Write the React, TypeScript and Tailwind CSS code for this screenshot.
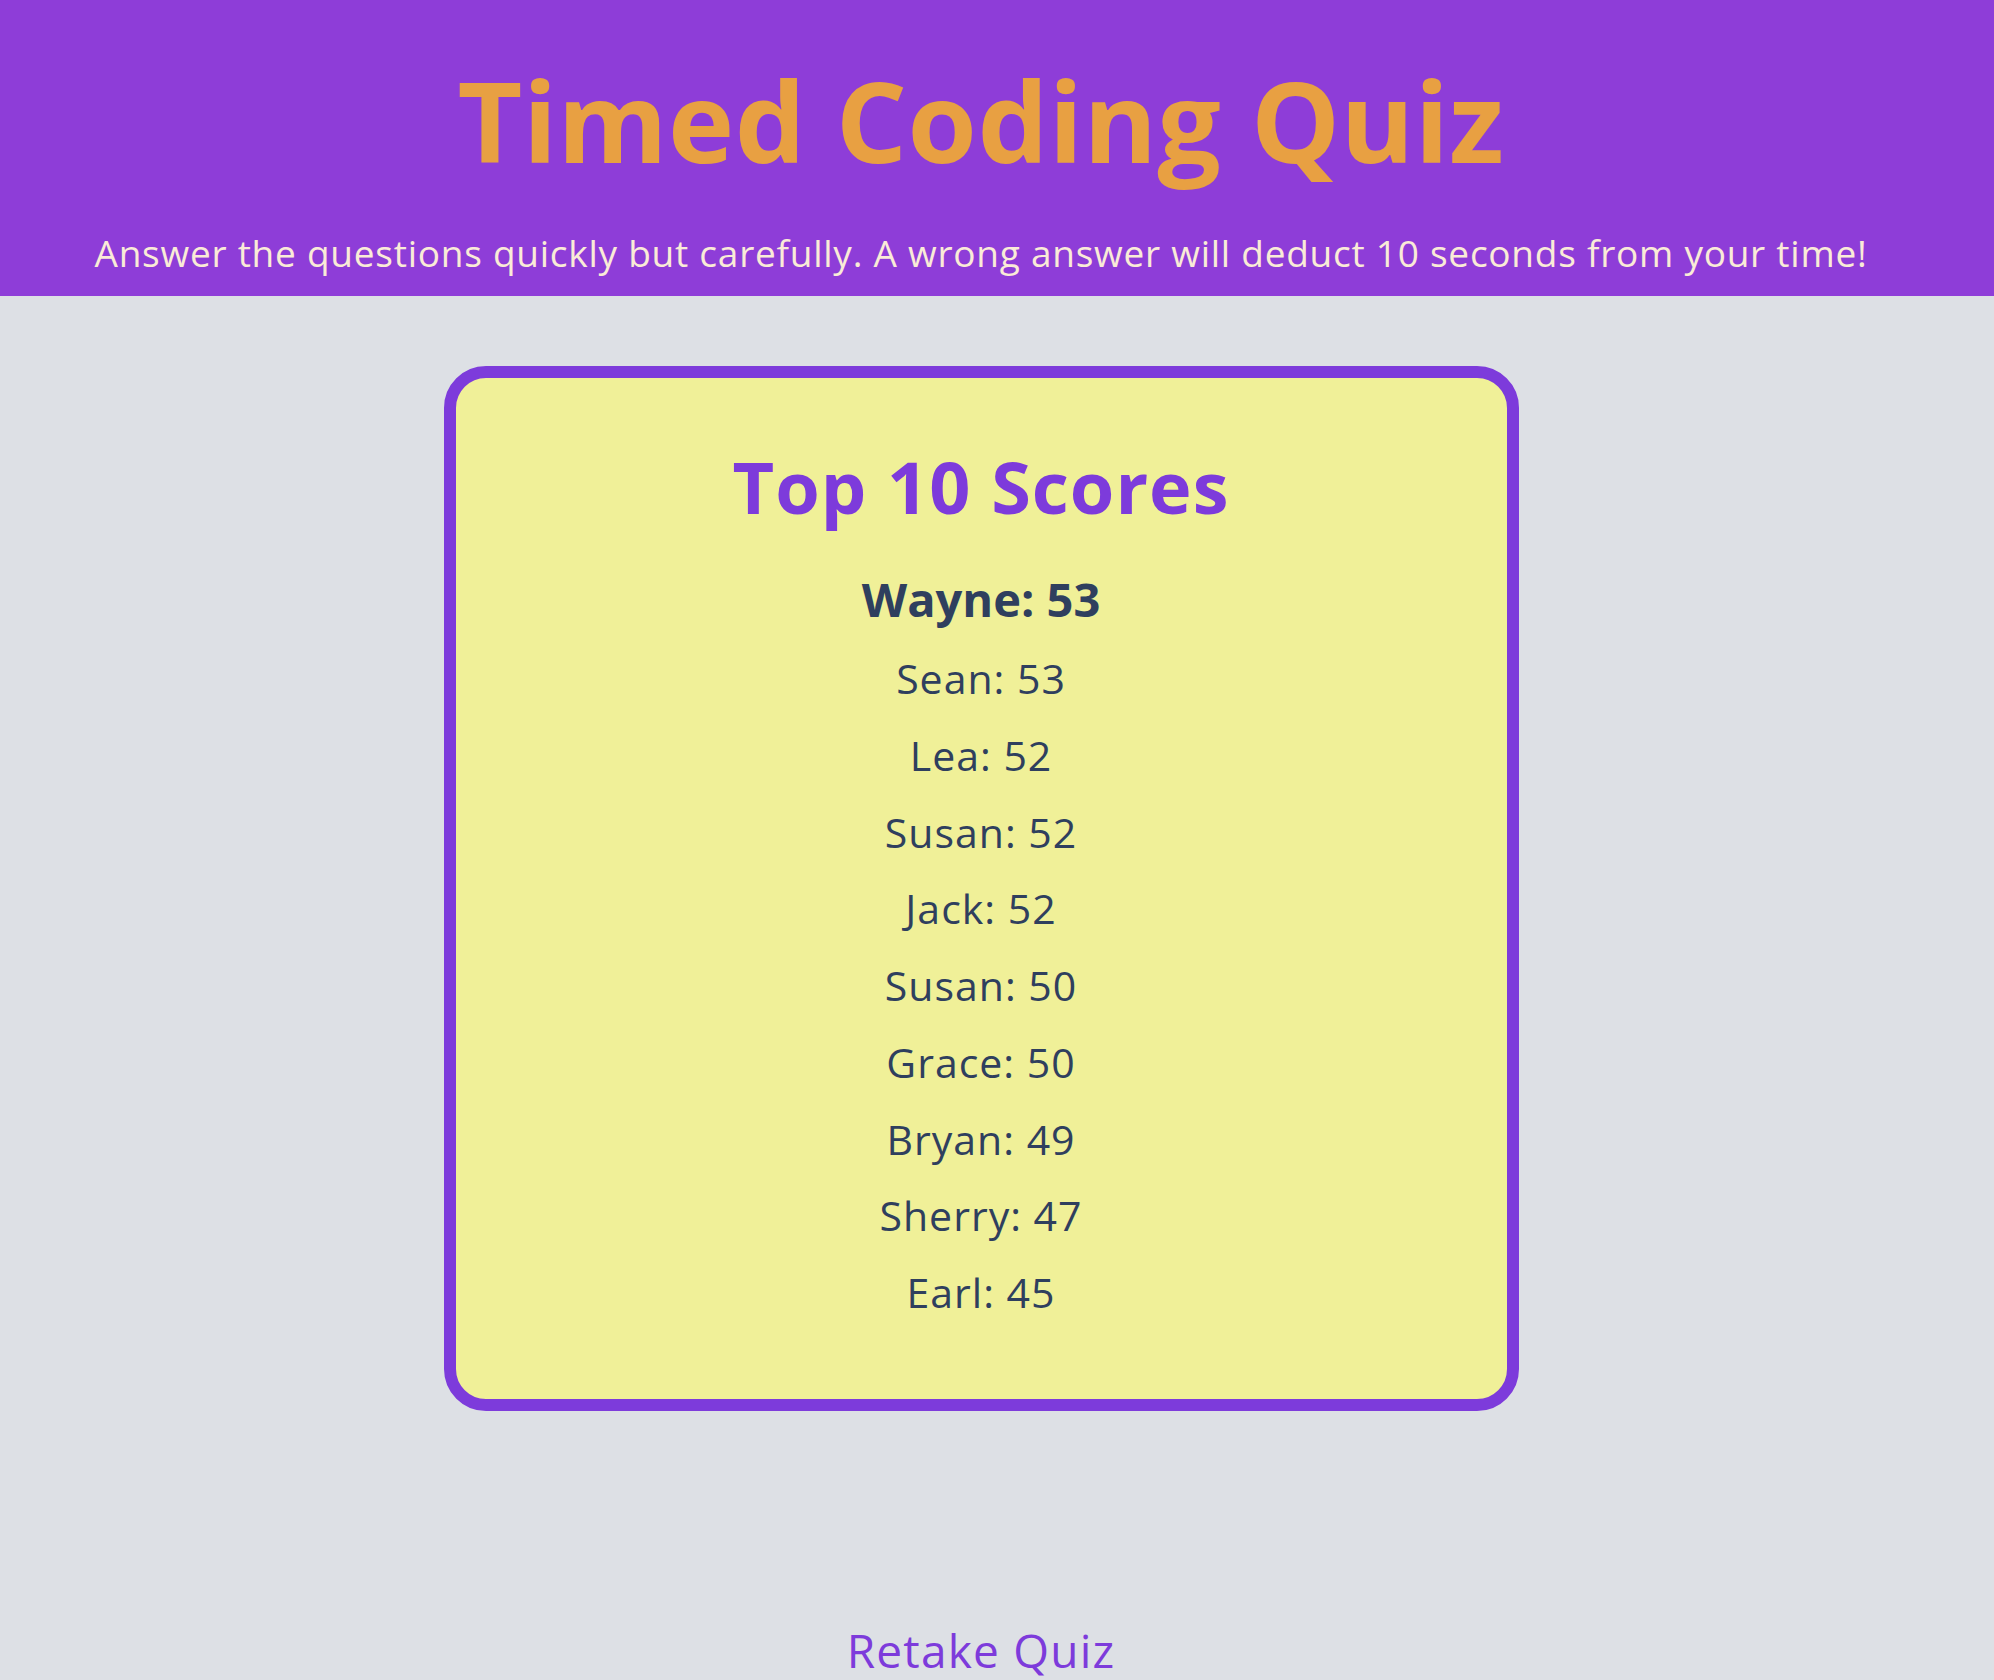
const scores = [
  { name: 'Sean', score: 53 },
  { name: 'Lea', score: 52 },
  { name: 'Susan', score: 52 },
  { name: 'Jack', score: 52 },
  { name: 'Susan', score: 50 },
  { name: 'Grace', score: 50 },
  { name: 'Bryan', score: 49 },
  { name: 'Sherry', score: 47 },
  { name: 'Earl', score: 45 },
]

export default function App() {
  return (
    <div className="min-h-[1680px] bg-[#dde0e5] font-['Open_Sans',sans-serif]">
      <header className="bg-[#8e3dd8]">
        <div className="w-[1962px] pt-[64px] pb-[25px] text-center">
          <h1 className="text-[112px] leading-none font-bold tracking-[0.5px] text-[#e8a042]">
            Timed Coding Quiz
          </h1>
          <p className="mt-[58px] text-[37px] leading-none tracking-[0.75px] text-[#faebd7]">
            Answer the questions quickly but carefully. A wrong answer will
            deduct 10 seconds from your time!
          </p>
        </div>
      </header>

      <main className="w-[1962px] flex flex-col items-center">
        <section className="mt-[70px] w-[1075px] rounded-[42px] border-[12px] border-[#7d3bdb] bg-[#f0f098] pt-[72px] pb-[68px] text-center">
          <h2 className="text-[72px] leading-none font-bold tracking-[1px] text-[#7d3bdb]">
            Top 10 Scores
          </h2>
          <p className="mt-[54px] text-[47px] leading-none font-bold text-[#2f3f5e]">
            Wayne: 53
          </p>
          <ul className="mt-[17px]">
            {scores.map((s, i) => (
              <li
                key={i}
                className="text-[41px] leading-[76.75px] tracking-[1px] text-[#2f3f5e]"
              >
                {s.name}: {s.score}
              </li>
            ))}
          </ul>
        </section>

        <button className="mt-[216px] text-[46px] leading-none tracking-[1.2px] text-[#7d3bdb]">
          Retake Quiz
        </button>
      </main>
    </div>
  )
}
